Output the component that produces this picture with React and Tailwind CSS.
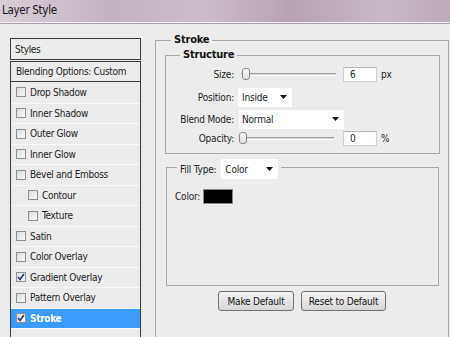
import { useState } from 'react'

const FONT = "font-['DejaVu_Sans_Condensed','Liberation_Sans',sans-serif]"

const ITEMS = [
  { label: 'Drop Shadow' },
  { label: 'Inner Shadow' },
  { label: 'Outer Glow' },
  { label: 'Inner Glow' },
  { label: 'Bevel and Emboss' },
  { label: 'Contour', sub: true },
  { label: 'Texture', sub: true },
  { label: 'Satin' },
  { label: 'Color Overlay' },
  { label: 'Gradient Overlay', checked: true },
  { label: 'Pattern Overlay' },
  { label: 'Stroke', checked: true, active: true },
]

function Check({ checked }) {
  return (
    <span className="w-[10px] h-[10px] shrink-0 border border-[#8e8f8f] bg-[linear-gradient(135deg,#dcdcdc,#fafafa)] flex items-center justify-center">
      {checked && (
        <svg width="8" height="8" viewBox="0 0 8 8">
          <path d="M1 4 L3 6.5 L7 1" fill="none" stroke="#21357a" strokeWidth="1.6" />
        </svg>
      )}
    </span>
  )
}

function Arrow() {
  return (
    <svg width="7" height="4" viewBox="0 0 7 4" className="shrink-0">
      <path d="M0 0 H7 L3.5 4 Z" fill="#111" />
    </svg>
  )
}

function Slider({ pos }) {
  return (
    <div className="relative w-[95px] h-[14px] flex items-center">
      <div className="w-full h-[3px] border-t border-[#a3a3a3] border-b border-b-white bg-[#d6d6d6]" />
      <div className="absolute top-[1px] w-[8px] h-[12px] rounded-[3px] border border-[#8a8a8a] bg-[linear-gradient(#fafafa,#dedede)]"
        style={{ left: pos }} />
    </div>
  )
}

function Field({ value }) {
  return (
    <div className="w-[34px] h-[15px] bg-white border border-[#d0d0d0] border-t-[#b4b4b4] pl-[6px] text-[10px] leading-[13px] text-[#222]">
      {value}
    </div>
  )
}

export default function App() {
  const [sel, setSel] = useState('Stroke')

  return (
    <div className={`w-[450px] h-[337px] overflow-hidden bg-[#ececec] text-[#1c1c1c] ${FONT}`}>

      {/* Title bar */}
      <div className="h-[22px] pl-[2px] text-[11.5px] tracking-[-0.3px] leading-[20px] text-[#161616] bg-[linear-gradient(90deg,#d9cdd7,#c4b3c2_25%,#cdbdca_45%,#b7a2b4_65%,#c9b9c6_85%,#bdaabb)]">
        Layer Style
      </div>
      <div className="h-[2px] border-t border-[#f4f0f4] border-b border-b-[#aaa0a9]" />

      <div className="flex pl-[10px]">

        {/* Left: styles list */}
        <div className="w-[131px] pt-[14px] text-[10px] tracking-[-0.3px] shrink-0">
          <div className="h-[22px] border border-[#3a3a3a] pl-[4px] flex items-center">Styles</div>
          <div className="mt-[1px] h-[21px] border border-[#3a3a3a] pl-[5px] flex items-center">
            Blending Options: Custom
          </div>
          <div className="h-[300px] border-x border-[#3a3a3a]">
            {ITEMS.map((it, i) => {
              const active = it.label === sel
              return (
                <div key={it.label} onClick={() => setSel(it.label)}
                  className={`h-[20.5px] flex items-center gap-[4px] ${i > 0 ? 'border-t border-[#f9f9f9]' : ''} ${it.sub ? 'pl-[17px]' : 'pl-[5px]'} ${active ? 'bg-[#3a9bff] text-white font-bold' : ''}`}>
                  <Check checked={it.checked} />
                  <span>{it.label}</span>
                </div>
              )
            })}
            <div className="border-t border-[#f9f9f9]" />
          </div>
        </div>

        {/* Right: stroke settings */}
        <fieldset className="ml-[14px] mt-[9px] w-[294px] h-[320px] border border-[#a8a8a8] text-[10px] tracking-[-0.2px]">
          <legend className="ml-[15px] px-[3px] h-[14px] leading-[14px] text-[11px] font-bold text-[#111]">Stroke</legend>

          <fieldset className="ml-[9px] mt-[1px] w-[275px] border border-[#a8a8a8] pb-[7px]">
            <legend className="ml-[14px] px-[3px] h-[14px] leading-[14px] text-[11px] font-bold text-[#111]">Structure</legend>

            <div className="h-[24px] flex items-center">
              <span className="w-[68px] text-right">Size:</span>
              <div className="ml-[7px]"><Slider pos={1} /></div>
              <div className="ml-[7px]"><Field value="6" /></div>
              <span className="ml-[4px]">px</span>
            </div>

            <div className="h-[22px] flex items-center">
              <span className="w-[68px] text-right">Position:</span>
              <div className="ml-[4px] w-[54px] h-[19px] bg-white flex items-center justify-between pl-[4px] pr-[5px]">
                <span>Inside</span><Arrow />
              </div>
            </div>

            <div className="h-[22px] flex items-center">
              <span className="w-[68px] text-right">Blend Mode:</span>
              <div className="ml-[5px] w-[105px] h-[19px] bg-white flex items-center justify-between pl-[3px] pr-[5px]">
                <span>Normal</span><Arrow />
              </div>
            </div>

            <div className="h-[16px] flex items-center">
              <span className="w-[68px] text-right">Opacity:</span>
              <div className="ml-[5px]"><Slider pos={0} /></div>
              <div className="ml-[9px]"><Field value="0" /></div>
              <span className="ml-[4px]">%</span>
            </div>
          </fieldset>

          <fieldset className="ml-[10px] mt-[1px] w-[273px] h-[131px] border border-[#a8a8a8]">
            <legend className="ml-[10px] px-[3px] pt-[4px] flex items-center">
              <span>Fill Type:</span>
              <div className="ml-[5px] w-[57px] h-[20px] bg-white flex items-center justify-between pl-[4px] pr-[5px]">
                <span>Color</span><Arrow />
              </div>
            </legend>
            <div className="mt-[10px] ml-[8px] flex items-center">
              <span>Color:</span>
              <div className="ml-[3px] w-[30px] h-[15px] bg-black border border-[#8a8a8a]" />
            </div>
          </fieldset>

          <div className="mt-[5px] flex justify-center gap-[7px]">
            <button className="w-[76px] h-[20px] rounded-[3px] border border-[#707070] bg-[linear-gradient(#f4f4f4,#e6e6e6_50%,#d6d6d6)] text-[10px] text-[#111]">
              Make Default
            </button>
            <button className="w-[85px] h-[20px] rounded-[3px] border border-[#707070] bg-[linear-gradient(#f4f4f4,#e6e6e6_50%,#d6d6d6)] text-[10px] text-[#111]">
              Reset to Default
            </button>
          </div>
        </fieldset>
      </div>
    </div>
  )
}
